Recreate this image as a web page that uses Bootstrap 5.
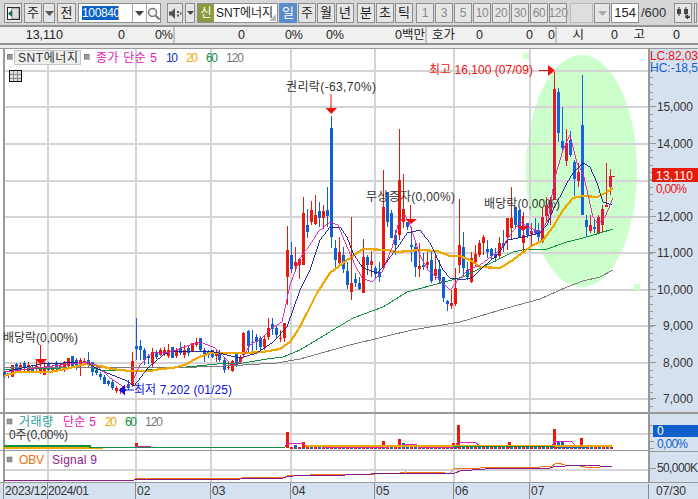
<!DOCTYPE html>
<html lang="ko">
<head>
<meta charset="utf-8">
<title>SNT에너지 차트</title>
<link href="https://cdn.jsdelivr.net/npm/bootstrap@5.3.0/dist/css/bootstrap.min.css" rel="stylesheet">
<style>
html,body{margin:0;height:499px;width:698px;overflow:hidden;background:#fff;font-family:"Liberation Sans","Noto Sans CJK KR",sans-serif;font-size:13px;color:#222}
.toolstrip{height:25px;width:698px;overflow:hidden;background:#d6d6d6;padding:3px 0 2px 4px;gap:1px;line-height:1}
.tb{height:20px;width:18px;padding:0;border:1px solid #8e8e8e;border-radius:0;background:#e6e6e6;color:#222;font-size:13px;line-height:18px;text-align:center;flex:none;display:flex;align-items:center;justify-content:center}
.tb:hover{background:#e6e6e6;color:#222;border-color:#8e8e8e}
.tb.on{background:#5a8cc8;color:#fff;border-color:#5a8cc8}
.tb.dim{color:#8a8a8a;letter-spacing:-.3px;font-size:12px}
.w3{width:3px}.w10{width:10px}.w12{width:12px}.w16{width:16px}.w19{width:19px}
.ms1px{margin-left:1px}.ms2px{margin-left:2px}.ms5px{margin-left:5px}
.codebox{width:83px;height:20px;background:#fff;border:1px solid #8e8e8e;flex:none;margin-left:1px}
.codetxt{width:54px;padding:2px 0 0 3px}
.codetxt span{background:#0a62c8;color:#fff;display:inline-block;width:37px;height:14px;line-height:14px;font-size:12px;letter-spacing:-.35px;border-right:1px solid #f08020}
.cbtn{width:14px;border-left:1px solid #aaa}
.namebox{width:81px;height:20px;background:#fff;border:1px solid #8e8e8e;margin-left:1px;flex:none;position:relative}
.sintag{width:16px;background:#8b9a3c;color:#fff;text-align:center;line-height:18px;font-size:12px;flex:none}
.nametxt{padding-left:2px;line-height:18px;font-size:12px;white-space:nowrap}
.corner{position:absolute;right:1px;bottom:1px;width:0;height:0;border-left:7px solid transparent;border-bottom:7px solid #b8b8b8}
.blank{width:23px;height:20px;background:#dedede;border:1px solid #bbb;flex:none;margin-left:2px}
.cntbox{width:28px;height:20px;background:#fff;border:1px solid #8e8e8e;text-align:right;padding-right:2px;line-height:18px;flex:none}
.cnt2{width:33px;line-height:20px;color:#333;padding-left:1px;flex:none}
.infobar{height:20px;background:#f0f0f0;border:solid #949494;border-width:2px 0;display:grid;grid-template-columns:63px 62px 48px 72px 58px 41px 81px 30px 28px 50px 22px 29px 34px 27px 35px;line-height:16px;font-size:12.5px;white-space:nowrap}
.infobar>div{text-align:right}
.infobar>.sep{box-shadow:2px 0 0 #c4c4c4}
.gapband{height:3px;background:#ededed}
.chartwrap{height:451px}
.panerow{width:698px}
.panerow svg{display:block;flex:none}
.axisfill{background:#d6e1ef}
svg text{font-family:"Liberation Sans","Noto Sans CJK KR",sans-serif;font-size:12px;fill:#333}
</style>
</head>
<body>
<div class="toolstrip d-flex align-items-start">
  <button class="btn tb" aria-label="메뉴"><svg width="13" height="13" viewBox="0 0 13 13"><rect x=".5" y=".5" width="12" height="12" fill="#fff" stroke="#222"/><rect x="5" y="1" width="7" height="11" fill="#ddd" stroke="#555" stroke-width=".6"/><path d="M1 6.500 5 3v7z" fill="#1a6a50"/></svg></button>
  <button class="btn tb ms1px">주</button>
  <button class="btn tb w12" aria-label="열기"><svg width="9" height="5"><path d="M0 0h9L4.500 5z" fill="#555"/></svg></button>
  <button class="btn tb w19 ms1px">전</button>
  <div class="codebox d-flex">
    <div class="codetxt"><span>100840</span></div>
    <div class="cbtn d-flex align-items-center justify-content-center"><svg width="9" height="5"><path d="M0 0h9L4.500 5z" fill="#444"/></svg></div>
    <div class="cbtn d-flex align-items-center justify-content-center"><svg width="13" height="13" viewBox="0 0 13 13"><circle cx="5.500" cy="5.500" r="4" fill="#f4f4f4" stroke="#777" stroke-width="1.500"/><path d="M8.500 8.500 12.500 12.500" stroke="#777" stroke-width="2"/></svg></div>
  </div>
  <button class="btn tb w16 ms5px" aria-label="소리"><svg width="13" height="11" viewBox="0 0 13 11"><path d="M0 3.500h2.500L6 0v11L2.500 7.500H0z" fill="#555"/><rect x="8" y="3" width="2" height="2" fill="#555"/><rect x="8" y="6.500" width="2" height="2" fill="#555"/><rect x="11" y="4" width="1.500" height="3" fill="#777"/></svg></button>
  <button class="btn tb w10 ms1px" aria-label="열기"><svg width="7" height="4"><path d="M0 0h7L3.500 4z" fill="#444"/></svg></button>
  <div class="namebox d-flex ms2px">
    <div class="sintag">신</div>
    <div class="nametxt">SNT에너지</div>
    <span class="corner"></span>
  </div>
  <button class="btn tb on">일</button>
  <button class="btn tb">주</button>
  <button class="btn tb">월</button>
  <button class="btn tb">년</button>
  <button class="btn tb ms2px">분</button>
  <button class="btn tb">초</button>
  <button class="btn tb">틱</button>
  <button class="btn tb dim ms2px">1</button>
  <button class="btn tb dim">3</button>
  <button class="btn tb dim">5</button>
  <button class="btn tb dim">10</button>
  <button class="btn tb dim">20</button>
  <button class="btn tb dim">30</button>
  <button class="btn tb dim">60</button>
  <button class="btn tb dim">120</button>
  <div class="blank"></div>
  <button class="btn tb w16" aria-label="열기"><svg width="9" height="5"><path d="M0 0h9L4.500 5z" fill="#aaa"/></svg></button>
  <div class="cntbox">154</div>
  <div class="cnt2">/600</div>
  <button class="btn tb" aria-label="봉"><svg width="15" height="14" viewBox="0 0 15 14"><path d="M3 1v9M10 1v9" stroke="#333"/><rect x="1" y="3" width="4" height="5" fill="#444"/><rect x="8" y="3" width="4" height="5" fill="#444"/><path d="M9 11h5M11.500 9v4" stroke="#333" stroke-width="1.500"/></svg></button>
  <button class="btn tb w3 ms1px" aria-label="봉"></button>
</div>
<div class="infobar">
  <div>13,110</div><div>0</div><div class="sep">0%</div>
  <div>0</div><div>0%</div><div>0%</div><div class="sep">0백만</div>
  <div>호가</div><div>0</div><div>0</div><div class="sep">0</div>
  <div>시</div><div>0</div><div>고</div><div>0</div>
</div>
<div class="gapband"></div>
<div class="chartwrap d-flex flex-column">
  <div class="panerow d-flex">
    <svg width="648" height="365" viewBox="0 48 648 365" aria-label="가격 차트">
      <g id="gridMain"></g>
      <ellipse cx="581.500" cy="171" rx="55.500" ry="116" fill="#ccffcc"/>
      <g id="gridOver"></g>
      <rect x="523" y="53" width="6" height="6" fill="#ccffcc"/><rect x="634" y="284" width="6" height="6" fill="#ccffcc"/>
      <g id="candles" shape-rendering="crispEdges"></g>
      <g id="mas" fill="none" shape-rendering="crispEdges"></g>
      <g shape-rendering="crispEdges">
        <rect x="7" y="54" width="5" height="5" fill="#999" stroke="#666" stroke-width=".5"/>
        <rect x="14.500" y="50.500" width="66" height="14" fill="#eee" stroke="#c8c8c8"/>
        <rect x="84" y="54" width="5" height="5" fill="#999" stroke="#666" stroke-width=".5"/>
        <rect x="9.500" y="70.500" width="12" height="11" fill="#ddd" stroke="#111"/>
        <path d="M13.500 71v10M17.500 71v10M10 74.500h11M10 78h11" stroke="#888"/>
      </g>
      <text x="18" y="62" textLength="60" lengthAdjust="spacing">SNT에너지</text>
      <text x="96" y="62" style="fill:#e020b0" textLength="61">종가 단순 5</text>
      <text x="166" y="62" style="fill:#1030c0" textLength="12">10</text>
      <text x="186" y="62" style="fill:#f0a800" textLength="12">20</text>
      <text x="206" y="62" style="fill:#109040" textLength="12">60</text>
      <text x="226" y="62" style="fill:#777" textLength="18">120</text>
      <text x="286" y="91" textLength="90">권리락(-63,70%)</text>
      <text x="366" y="201" textLength="89">무상증자(0,00%)</text>
      <text x="484" y="208" textLength="76">배당락(0,00%)</text>
      <text x="3" y="342" textLength="75">배당락(0,00%)</text>
      <text x="429" y="74" style="fill:#f01010" textLength="104">최고 16,100 (07/09)</text>
      <text x="134" y="394" style="fill:#1010e0" textLength="98">최저 7,202 (01/25)</text>
      <g fill="#f01010" stroke="none">
        <rect x="330.500" y="94" width="1" height="15"/><path d="M325.500 108h11.500l-5.700 6z"/>
        <rect x="410" y="205" width="1" height="15"/><path d="M405 219h12l-6 5z"/>
        <rect x="522" y="216" width="1" height="11"/><path d="M517 226h12l-6 5z"/>
        <rect x="40" y="345" width="1" height="15"/><path d="M35 359h12l-6 6z"/>
        <rect x="539" y="70" width="10" height="1"/><path d="M548 65v11l7-5.500z"/>
      </g>
      <g fill="#1010e0"><rect x="124" y="389.500" width="10" height="1"/><path d="M125 384.500v11l-6-5.500z"/></g>
    </svg>
    <svg class="axisfill" width="50" height="365" viewBox="648 48 50 365" aria-label="가격 축">
      <g id="axisMain" shape-rendering="crispEdges"></g>
      <text x="650" y="60" style="fill:#f01010" textLength="48">LC:82,03</text>
      <text x="650" y="72" style="fill:#1060d0" textLength="48">HC:-18,5</text>
      <text x="657" y="111" textLength="36">15,000</text>
      <text x="657" y="148" textLength="36">14,000</text>
      <text x="657" y="221" textLength="36">12,000</text>
      <text x="657" y="257" textLength="36">11,000</text>
      <text x="657" y="294" textLength="36">10,000</text>
      <text x="663" y="330" textLength="30">9,000</text>
      <text x="663" y="367" textLength="30">8,000</text>
      <text x="663" y="403" textLength="30">7,000</text>
      <rect x="652" y="168" width="46" height="14" fill="#ea1a0a"/>
      <text x="656" y="180" style="fill:#fff" textLength="37">13,110</text>
      <text x="656" y="193" style="fill:#f01010" textLength="31">0,00%</text>
    </svg>
  </div>
  <div class="panerow d-flex">
    <svg width="648" height="38" viewBox="0 413 648 38" aria-label="거래량 차트">
      <g id="volGrid" shape-rendering="crispEdges"></g>
      <g id="volBars" shape-rendering="crispEdges"></g>
      <g id="volLines" fill="none" shape-rendering="crispEdges"></g>
      <rect x="7" y="419" width="5" height="5" fill="#999" stroke="#666" stroke-width=".5"/>
      <text x="19" y="426" style="fill:#2a9d9d" textLength="34">거래량</text>
      <text x="63" y="426" style="fill:#e020b0" textLength="33">단순 5</text>
      <text x="105" y="426" style="fill:#f0a800" textLength="12">20</text>
      <text x="125" y="426" style="fill:#109040" textLength="12">60</text>
      <text x="145" y="426" style="fill:#777" textLength="18">120</text>
      <text x="9" y="439" textLength="59">0주(0,00%)</text>
    </svg>
    <svg class="axisfill" width="50" height="38" viewBox="648 413 50 38" aria-label="거래량 축">
      <g id="axisVol" shape-rendering="crispEdges"></g>
      <rect x="653" y="425" width="45" height="12" fill="#1060cc"/>
      <text x="657" y="435" style="fill:#fff">0</text>
      <text x="657" y="448" style="fill:#1060d0" textLength="31">0,00%</text>
    </svg>
  </div>
  <div class="panerow d-flex">
    <svg width="648" height="32" viewBox="0 451 648 32" aria-label="OBV 차트">
      <g id="obvGrid" shape-rendering="crispEdges"></g>
      <g id="obvLines" fill="none" shape-rendering="crispEdges"></g>
      <rect x="7" y="457" width="5" height="5" fill="#999" stroke="#666" stroke-width=".5"/>
      <text x="19" y="464" style="fill:#f07010" textLength="25">OBV</text>
      <text x="52" y="464" style="fill:#8a1a8a" textLength="45">Signal 9</text>
    </svg>
    <svg class="axisfill" width="50" height="32" viewBox="648 451 50 32" aria-label="OBV 축">
      <g shape-rendering="crispEdges"><rect x="648" y="451" width="2" height="31" fill="#999"/><rect x="648" y="468" width="8" height="1" fill="#999"/><rect x="648" y="450" width="50" height="2" fill="#999"/><rect x="648" y="482" width="50" height="1" fill="#999"/></g>
      <text x="657" y="472" textLength="41">50,000K</text>
    </svg>
  </div>
  <div class="panerow d-flex">
    <svg class="axisfill" width="698" height="16" viewBox="0 483 698 16" aria-label="시간 축">
      <g id="timeTicks" shape-rendering="crispEdges"></g>
      <text x="5" y="495" textLength="42">2023/12</text>
      <text x="48" y="495" textLength="41">2024/01</text>
      <text x="137" y="495">02</text>
      <text x="212" y="495">03</text>
      <text x="292" y="495">04</text>
      <text x="376" y="495">05</text>
      <text x="455" y="495">06</text>
      <text x="531" y="495">07</text>
      <text x="656" y="495" textLength="30">07/30</text>
    </svg>
  </div>
</div>
<script>
const R='r',B='b';
// [x, high, bodyTop, bodyBottom, low, colour]
const c=[[4,372,372,377,378,B],[8,373,373,374,378,B],[12,365,365,377,377,R],[16,363,364,371,373,B],[20,363,365,369,372,R],[24,361,363,367,371,B],[28,362,365,371,372,R],[32,365,367,371,372,B],[36,360,366,368,371,R],[40,360,368,371,374,R],[44,362,368,375,375,R],[48,362,364,370,372,B],[52,365,367,370,373,R],[56,361,363,368,370,B],[60,364,366,368,370,R],[64,361,363,368,372,R],[68,358,358,366,369,R],[72,356,356,366,367,B],[76,358,360,367,370,B],[80,358,360,366,376,R],[84,358,361,362,365,R],[88,352,360,363,367,B],[92,362,362,372,376,B],[96,368,370,373,375,B],[100,372,374,377,380,B],[104,375,377,384,384,B],[108,380,381,384,386,B],[112,380,382,388,390,B],[116,386,388,391,393,R],[120,388,390,391,394,R],[124,387,389,391,392,B],[128,380,384,388,390,B],[132,352,361,385,387,R],[136,318,346,349,360,B],[140,340,346,350,360,B],[144,348,350,360,365,B],[148,354,356,358,364,B],[152,348,352,363,367,R],[156,350,352,357,359,B],[160,348,350,355,356,R],[164,347,350,354,356,R],[168,344,350,356,358,R],[172,347,347,358,358,B],[176,348,350,356,358,R],[180,342,348,353,355,B],[184,345,350,355,358,R],[188,346,348,353,356,B],[192,343,343,351,352,R],[196,338,342,345,347,R],[200,338,338,350,352,B],[204,348,350,355,362,B],[208,350,352,355,358,B],[212,350,350,357,358,B],[216,350,353,356,362,R],[219,350,352,360,362,B],[224,358,360,370,373,B],[228,362,367,368,370,R],[232,360,361,371,372,R],[236,353,354,366,367,B],[240,355,357,362,364,R],[243,332,333,355,358,R],[248,330,331,346,352,B],[252,330,342,343,352,B],[256,334,337,342,350,B],[260,336,338,347,352,B],[264,335,339,347,350,R],[268,318,328,337,340,R],[272,318,324,329,335,B],[276,326,328,335,338,B],[280,330,338,339,342,R],[284,323,323,338,342,R],
[287,226,250,277,305,R],[291,242,255,269,273,B],[295,247,262,266,272,R],[299,258,259,265,279,R],[303,197,213,265,265,R],[307,209,225,232,238,B],[311,201,210,222,225,R],[315,195,215,224,225,R],[319,202,211,218,227,B],[323,205,211,218,229,R],[327,187,210,216,227,B],[331,116,128,237,248,B],[335,240,248,260,269,B],[339,237,252,263,267,R],[343,247,255,269,273,B],[347,262,271,285,289,B],[351,217,283,292,300,R],[355,273,279,283,287,B],[359,277,283,289,290,B],[363,239,257,293,293,R],[367,255,257,265,275,B],[371,251,261,265,277,R],[375,266,268,274,278,B],[379,262,272,277,282,B],[383,170,207,268,268,R],[387,192,192,222,227,B],[391,210,213,238,238,B],[395,230,235,245,255,B],[399,129,180,235,240,R],[403,174,209,222,228,R],[407,222,222,227,230,B],[411,227,245,247,262,B],[415,243,247,267,277,B],[419,243,266,269,277,R],[423,253,265,267,270,B],[427,252,262,265,270,R],[431,252,260,281,283,B],[435,255,269,276,280,R],[439,260,269,280,283,B],[443,277,277,298,302,B],[447,300,301,304,311,B],[451,290,303,306,309,R],[455,268,288,304,306,R],[459,199,245,265,273,R],
[463,232,247,268,277,B],[467,262,270,277,280,B],[471,252,258,282,283,R],[475,245,254,262,267,R],[479,240,243,255,257,R],[483,235,237,243,255,R],[487,240,249,252,258,B],[491,248,249,256,260,B],[495,248,254,258,262,B],[499,237,243,256,258,R],[503,230,243,246,252,B],[507,218,218,237,250,R],[511,187,218,228,240,R],[515,207,207,225,228,B],[519,210,210,237,238,B],[523,212,235,243,252,R],[527,223,223,235,238,B],[531,223,231,234,245,R],[535,218,230,233,235,B],[538,223,230,237,242,B],[542,208,217,242,243,R],[546,197,205,216,222,R],[550,197,200,213,225,R],[554,72,89,200,200,R],[558,88,92,133,142,B],[562,107,141,148,152,B],[566,129,143,161,166,R],[570,131,140,155,157,B],[574,160,162,179,196,B],[578,163,172,181,187,R],[582,75,125,215,215,B],[586,215,220,227,236,B],[590,215,225,231,233,R],[594,220,227,229,233,B],[598,215,217,233,233,R],[602,205,209,225,232,R],[606,163,205,207,207,R],[610,169,176,187,195,R]];
const col=(k,x)=>k===R?(x>=526&&x<=637?'#dc1c38':'#ea1a0a'):(x>=526&&x<=637?'#1c60e0':'#1060d0');
document.getElementById('candles').innerHTML=c.map(([x,h,t,b,l,k])=>`<rect x="${x}" y="${h}" width="1" height="${l-h}" fill="${col(k,x)}"/><rect x="${x-1}" y="${t}" width="3" height="${Math.max(b-t,1)}" fill="${col(k,x)}"/>`).join('')+'<rect x="612" y="176" width="3" height="1" fill="#dc1c38"/>';
const line=(p,s,w)=>`<polyline points="${p.map(a=>a.join(',')).join(' ')}" stroke="${s}" stroke-width="${w}"/>`;
document.getElementById('mas').innerHTML=[
 line([[4,370],[90,367],[100,370],[130,371],[163,369],[197,366],[217,364],[243,363],[267,359],[283,357],[300,350],[333,330],[353,318],[383,307],[407,292],[433,285],[463,277],[497,260],[513,252],[527,249],[547,249],[567,242],[583,238],[600,233],[613,229]],'#109040',1),
 line([[4,367],[120,367],[170,368],[197,367],[223,366],[243,365],[277,363],[300,359],[350,345],[412,330],[460,322],[507,308],[540,299],[567,287],[583,281],[600,277],[613,270]],'#7e7e7e',1),
 line([[4,376],[17,372],[50,372],[70,368],[85,364],[100,366],[112,369],[130,371],[150,371],[160,369],[172,368],[185,365],[197,358],[210,353],[243,353],[263,352],[280,349],[290,342],[298,330],[307,313],[317,293],[330,273],[347,260],[363,249],[387,250],[397,252],[420,250],[437,251],[450,256],[460,256],[470,260],[480,267],[500,268],[513,260],[530,247],[543,240],[553,227],[563,210],[573,198],[583,196],[597,197],[607,192],[613,188]],'#f0a800',2.2),
 line([[4,372],[40,364],[85,362],[100,370],[112,375],[127,381],[134,386],[148,368],[163,355],[170,352],[210,351],[227,355],[240,358],[257,353],[273,342],[287,327],[300,290],[310,270],[320,240],[330,227],[340,227],[347,237],[353,253],[363,268],[377,273],[383,267],[397,248],[407,233],[420,230],[430,243],[443,270],[450,278],[463,280],[473,277],[483,267],[497,255],[508,240],[523,237],[540,233],[547,225],[553,210],[567,183],[573,173],[583,163],[590,167],[597,183],[603,202],[612,205]],'#16168e',.9),
 line([[4,372],[85,362],[96,365],[110,378],[125,388],[132,382],[140,365],[148,356],[156,352],[170,352],[190,345],[200,342],[215,348],[225,358],[232,366],[240,362],[250,345],[262,338],[272,328],[282,322],[290,285],[300,258],[310,245],[318,232],[330,222],[338,225],[345,242],[355,265],[362,278],[372,282],[382,272],[392,248],[398,225],[405,215],[410,225],[415,240],[420,255],[428,270],[440,280],[450,290],[458,280],[468,270],[480,265],[500,250],[510,235],[520,222],[530,228],[540,232],[548,220],[555,177],[563,150],[570,135],[577,163],[583,173],[587,190],[593,217],[598,224],[605,217],[613,198]],'#e020b0',.9)
].join('');
const vx=[47,135,210,290,374,453,529];
const hz=[70,106,143,180,216,252,289,325,362,398];
document.getElementById('gridMain').innerHTML='<rect x="3" y="48" width="645" height="365" fill="#fff"/>';
document.getElementById('gridOver').innerHTML=`<g shape-rendering="crispEdges">`+hz.map(y=>`<rect x="3" y="${y}" width="645" height="1.500" fill="#d4d4d4"/>`).join('')+vx.map(x=>`<rect x="${x}" y="48" width="1.500" height="365" fill="#d4d4d4"/>`).join('')+`<rect x="0" y="47" width="648" height="2" fill="#999"/><rect x="3" y="48" width="1.500" height="365" fill="#999"/><rect x="0" y="412" width="648" height="1" fill="#999"/></g>`;
let ax='<rect x="648" y="48" width="2" height="365" fill="#999"/><rect x="648" y="47" width="50" height="2" fill="#999"/><rect x="648" y="412" width="50" height="1" fill="#999"/>';
for(let y=62.400;y<412;y+=7.314){ax+=`<rect x="648" y="${Math.round(y)}" width="5" height="1" fill="#999"/>`;}
hz.forEach(y=>ax+=`<rect x="648" y="${y}" width="8" height="1" fill="#999"/>`);
document.getElementById('axisMain').innerHTML=ax;
document.getElementById('axisVol').innerHTML='<rect x="648" y="413" width="2" height="38" fill="#999"/><rect x="648" y="413" width="50" height="1" fill="#999"/>'+[425,433,441,448].map(y=>`<rect x="648" y="${y}" width="6" height="1" fill="#999"/>`).join('');
const g2=(id,ys,t,h)=>document.getElementById(id).innerHTML=ys.map(y=>`<rect x="3" y="${y}" width="645" height="1.500" fill="#d4d4d4"/>`).join('')+vx.map(x=>`<rect x="${x}" y="${t}" width="1.500" height="${h}" fill="#d4d4d4"/>`).join('')+`<rect x="3" y="${t}" width="1.500" height="${h}" fill="#999"/>`;
g2('volGrid',[433],413,38);g2('obvGrid',[469],451,32);
document.querySelector('#volGrid').innerHTML+='<rect x="0" y="449.500" width="648" height="1.500" fill="#999"/><rect x="0" y="413" width="648" height="1" fill="#999"/>';
document.querySelector('#obvGrid').innerHTML+='<rect x="0" y="481.500" width="648" height="1.500" fill="#999"/>';
const vb=[[136,443,R],[287,432,R],[295,445,B],[303,442,R],[383,441,R],[399,439,R],[403,443,B],[453,443,R],[458,425,R],[509,442,R],[554,429,R],[558,441,B],[562,442,B],[581,438,R]];
let vh='';
for(let x=290;x<612;x+=4){vh+=`<rect x="${x}" y="447" width="3" height="1.500" fill="${(x%8===2)?'#ea1a0a':'#1060d0'}"/>`;}
vh+=vb.map(([x,y,k])=>`<rect x="${x-1}" y="${y}" width="3" height="${448-y}" fill="${k===R?'#ea1a0a':'#1060d0'}"/>`).join('');
for(let x=566;x<590;x+=4){vh+=`<rect x="${x-1}" y="445" width="3" height="3" fill="#1060d0"/>`;}
document.getElementById('volBars').innerHTML=vh;
document.getElementById('volLines').innerHTML=[
 line([[135,446],[150,446],[150,447],[285,447],[287,443],[303,443],[305,445],[320,445],[322,447],[388,447],[390,445],[404,445],[405,444],[416,444],[418,447],[455,447],[458,442],[475,442],[480,446],[552,446],[555,441],[571,441],[575,445],[612,445]],'#e020b0',1),
 line([[4,448],[103,448]],'#f0a800',1.500),
 line([[305,446],[612,446]],'#f0a800',1.500),
 line([[4,446],[90,446],[90,447.500],[285,447.500]],'#109040',1.500),
 line([[453,446.500],[555,446.500]],'#109040',1.500)
].join('');
document.getElementById('obvLines').innerHTML=[
 line([[135,479],[137,478],[146,478],[190,479],[198,478],[200,479],[285,477],[289,475],[310,475],[320,474],[345,474],[350,475],[400,473],[405,472],[445,473],[450,473],[455,468],[470,468],[480,468],[510,467],[540,467],[552,466],[555,464],[558,463],[565,465],[580,466],[585,467],[600,467],[605,466],[612,466]],'#f07010',1),
 line([[4,480],[134,480],[137,479],[240,479],[241,478],[283,478],[286,477],[300,475],[345,475],[398,473],[455,473],[460,471],[485,469],[508,468],[550,468],[553,467],[565,466],[582,465],[600,466],[612,466]],'#8a1a8a',1)
].join('');
document.getElementById('timeTicks').innerHTML=[47,135,210,290,374,453,529].map(x=>`<rect x="${x}" y="483" width="1" height="16" fill="#8a8a8a"/>`).join('')+'<rect x="648" y="484" width="1" height="15" fill="#8a8a8a"/><rect x="3" y="483" width="1" height="16" fill="#8a8a8a"/>';
</script>
<script src="https://cdn.jsdelivr.net/npm/bootstrap@5.3.0/dist/js/bootstrap.bundle.min.js"></script>
</body>
</html>
